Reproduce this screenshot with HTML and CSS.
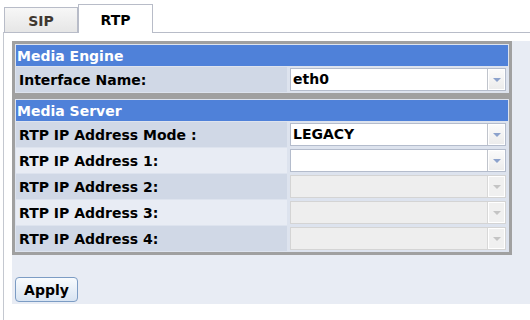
FILE: index.html
```html
<!DOCTYPE html>
<html lang="en">
<head>
    <meta charset="UTF-8">
    <title>RTP Settings</title>
    <link rel="stylesheet" href="styles.css">
</head>
<body>
    <div class="tabs">
        <a class="tab">SIP</a>
        <a class="tab active">RTP</a>
    </div>
    <div class="panel">
        <div class="content">
            <table class="grid">
                <tr><th colspan="2">Media Engine</th></tr>
                <tr class="dark">
                    <td class="label">Interface Name:</td>
                    <td class="field"><div class="combo"><span class="val">eth0</span><span class="arrow"></span></div></td>
                </tr>
            </table>
            <table class="grid">
                <tr><th colspan="2">Media Server</th></tr>
                <tr class="dark">
                    <td class="label">RTP IP Address Mode :</td>
                    <td class="field"><div class="combo"><span class="val">LEGACY</span><span class="arrow"></span></div></td>
                </tr>
                <tr class="light">
                    <td class="label">RTP IP Address 1:</td>
                    <td class="field"><div class="combo"><span class="val"></span><span class="arrow"></span></div></td>
                </tr>
                <tr class="dark">
                    <td class="label">RTP IP Address 2:</td>
                    <td class="field"><div class="combo off"><span class="val"></span><span class="arrow"></span></div></td>
                </tr>
                <tr class="light">
                    <td class="label">RTP IP Address 3:</td>
                    <td class="field"><div class="combo off"><span class="val"></span><span class="arrow"></span></div></td>
                </tr>
                <tr class="dark">
                    <td class="label">RTP IP Address 4:</td>
                    <td class="field"><div class="combo off"><span class="val"></span><span class="arrow"></span></div></td>
                </tr>
            </table>
            <button class="apply">Apply</button>
        </div>
    </div>
</body>
</html>
```

FILE: styles.css
```css
body {
    margin: 0;
    font-family: "DejaVu Sans", Verdana, sans-serif;
    font-size: 14px;
    font-weight: bold;
    background: #fff;
    color: #000;
}
.tabs {
    display: flex;
    align-items: flex-end;
    height: 32px;
    margin-left: 3px;
    padding-left: 1px;
}
.tab {
    box-sizing: border-box;
    display: flex;
    align-items: center;
    justify-content: center;
    border: 1px solid #b8bcc8;
    border-bottom: none;
    width: 74px;
    height: 25px;
    padding-top: 2px;
    color: #403830;
    background: linear-gradient(#f7f7f7, #e6e6e6);
}
.tab.active {
    position: relative;
    width: 75px;
    height: 29px;
    margin-bottom: -1px;
    padding-top: 1px;
    color: #000;
    background: #fff;
}
.panel {
    margin-left: 3px;
    border-top: 1px solid #b8bcc8;
    border-left: 1px solid #c4c8d0;
    padding: 8px 0 0 8px;
    height: 279px;
}
.content {
    background: #e8ecf4;
    padding-bottom: 2px;
}
.grid {
    width: 500px;
    border: 3px solid #a0a0a0;
    border-spacing: 1px;
    background: #dde3ee;
}
.grid th {
    box-sizing: border-box;
    height: 21px;
    padding: 0 0 0 1px;
    text-align: left;
    color: #fff;
    background: #4f81d9;
}
.grid td {
    box-sizing: border-box;
    height: 25px;
    padding: 0;
}
.dark .label {
    background: #d0d8e6;
}
.light .label {
    background: #e8ecf4;
}
.label {
    width: 271px;
    padding-left: 3px !important;
}
.field {
    padding: 1px 2px !important;
}
.combo {
    display: flex;
    height: 23px;
    box-sizing: border-box;
    border: 1px solid #b4bccc;
    background: #fff;
}
.combo .val {
    flex: 1;
    padding-left: 2px;
    line-height: 21px;
}
.combo .arrow {
    width: 17px;
    border-left: 1px solid #c0c4cc;
    box-shadow: inset 0 0 0 1px #fff;
    background: linear-gradient(#fbfbfb, #ebebeb);
    display: flex;
    align-items: center;
    justify-content: center;
}
.combo .arrow::after {
    content: "";
    border-left: 4px solid transparent;
    border-right: 4px solid transparent;
    border-top: 4px solid #8ca2cc;
}
.combo.off {
    border-color: #d4d4d4;
    background: #eeeeee;
}
.combo.off .arrow {
    border-left-color: #d8d8d8;
    background: #f0f0f0;
}
.combo.off .arrow::after {
    border-top-color: #c4c4c4;
}
.apply {
    margin: 22px 0 0 3px;
    width: 63px;
    height: 25px;
    padding: 0;
    border: 1px solid #7c9cc4;
    border-radius: 4px;
    background: linear-gradient(#f8fbfe, #d8e4f2);
    font-family: "DejaVu Sans", Verdana, sans-serif;
    font-size: 14px;
    font-weight: bold;
    color: #000;
}
```
